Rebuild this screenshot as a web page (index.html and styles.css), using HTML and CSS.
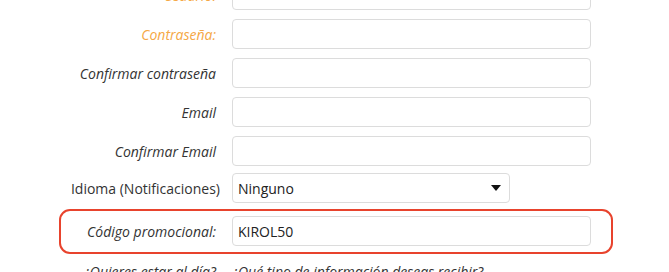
FILE: index.html
```html
<!DOCTYPE html>
<html lang="es">
<head>
    <meta charset="UTF-8">
    <title>Registro</title>
    <link rel="stylesheet" href="styles.css">
</head>
<body>
    <form class="register">
        <div class="row">
            <label class="label required" for="user">Usuario:</label>
            <input type="text" id="user">
        </div>
        <div class="row">
            <label class="label required" for="pass">Contraseña:</label>
            <input type="password" id="pass">
        </div>
        <div class="row">
            <label class="label" for="pass2">Confirmar contraseña</label>
            <input type="password" id="pass2">
        </div>
        <div class="row">
            <label class="label" for="email">Email</label>
            <input type="text" id="email">
        </div>
        <div class="row">
            <label class="label" for="email2">Confirmar Email</label>
            <input type="text" id="email2">
        </div>
        <div class="row row-select">
            <label class="label upright" for="lang">Idioma (Notificaciones)</label>
            <div class="select">
                <span>Ninguno</span>
                <span class="arrow"></span>
            </div>
        </div>
        <div class="row promo">
            <label class="label" for="promo">Código promocional:</label>
            <input type="text" id="promo" value="KIROL50">
        </div>
        <div class="row news">
            <span class="label">¿Quieres estar al día?</span>
            <span class="question">¿Qué tipo de información deseas recibir?</span>
        </div>
    </form>
</body>
</html>
```

FILE: styles.css
```css
body {
    margin: 0;
    background-color: #fff;
    font-family: "Open Sans", Lato, sans-serif;
    font-size: 14px;
    color: #333;
    overflow: hidden;
}

.register {
    display: flex;
    flex-direction: column;
    margin-top: -20px;
}

.row {
    display: flex;
    align-items: center;
    margin-bottom: 9px;
}

.label {
    flex-shrink: 0;
    width: 232px;
    padding-right: 16px;
    box-sizing: border-box;
    text-align: right;
    font-style: italic;
    color: #333;
}

.required {
    color: #f5a845;
}

.upright {
    font-style: normal;
    padding-right: 12px;
}

input, .select {
    box-sizing: border-box;
    width: 359px;
    height: 30px;
    padding: 0 5px;
    border: 1px solid #dcdcdc;
    border-radius: 4px;
    font-family: inherit;
    font-size: 14px;
    color: #222;
    background: #fff;
}

.row-select {
    margin-top: -2px;
    margin-bottom: 6px;
}

.select {
    width: 278px;
    display: flex;
    align-items: center;
    justify-content: space-between;
    padding-right: 8px;
}

.arrow {
    width: 0;
    height: 0;
    border-left: 5px solid transparent;
    border-right: 5px solid transparent;
    border-top: 6px solid #111;
}

.promo {
    margin-left: 59px;
    width: 554px;
    box-sizing: border-box;
    border: 2px solid #e8432d;
    border-radius: 11px;
    padding: 5px 0 6px;
    margin-bottom: 6px;
}

.promo .label {
    width: 171px;
}

.news {
    align-items: baseline;
    margin-top: 2px;
}

.question {
    font-style: italic;
}
```
